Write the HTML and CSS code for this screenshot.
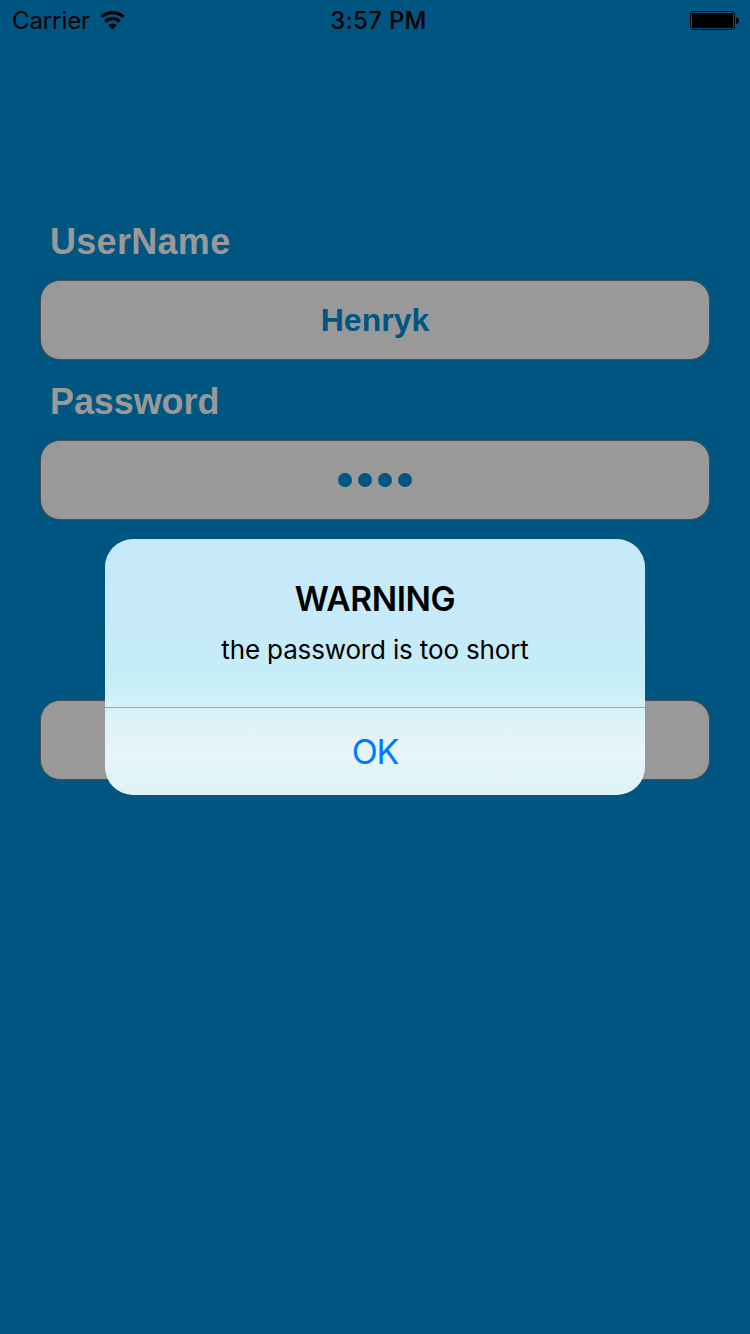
FILE: index.html
```html
<!DOCTYPE html>
<html lang="en">
<head>
<meta charset="utf-8">
<title>Login</title>
<link rel="stylesheet" href="styles.css">
</head>
<body>
<div class="screen">
  <header class="status">
    <div class="status-left">
      <span class="carrier">Carrier</span>
      <svg class="wifi" width="26" height="20" viewBox="0 0 26 20">
        <path d="M1.4 5.9A16.6 16.6 0 0 1 23.6 5.9" fill="none" stroke="#000" stroke-width="3.2"/>
        <path d="M5.4 10.5A10.2 10.2 0 0 1 19.6 10.5" fill="none" stroke="#000" stroke-width="3.2"/>
        <path d="M8.2 14.2A6 6 0 0 1 16.8 14.2L12.5 18.8Z"/>
      </svg>
    </div>
    <span class="time">3:57 PM</span>
    <svg class="battery" width="50" height="20" viewBox="0 0 50 20">
      <rect x=".5" y=".5" width="44" height="18" rx="3" fill="none" stroke="#000"/>
      <rect x="2" y="2" width="41" height="15" rx="1.6"/>
      <path d="M46 6.5Q49 7 49 9.7T46 13Z"/>
    </svg>
  </header>
  <main class="form">
    <label class="label username">UserName</label>
    <div class="field"><span class="value">Henryk</span></div>
    <label class="label password">Password</label>
    <div class="field dots"><i class="dot"></i><i class="dot"></i><i class="dot"></i><i class="dot"></i></div>
    <div class="field submit"></div>
  </main>
  <div class="overlay">
    <section class="alert" role="alertdialog">
      <div class="alert-body">
        <h1 class="title"><span>WARNING</span></h1>
        <p class="message"><span>the password is too short</span></p>
      </div>
      <div class="action"><span class="ok">OK</span></div>
    </section>
  </div>
</div>
</body>
</html>
```
FILE: styles.css
```css
body { margin: 0; }
.screen {
  position: relative;
  width: 750px;
  height: 1334px;
  overflow: hidden;
  background: #005581;
  font-family: Inter, "Liberation Sans", sans-serif;
}
.status {
  display: grid;
  grid-template-columns: 1fr auto 1fr;
  align-items: center;
  height: 42px;
  padding: 0 10px 0 12px;
  color: #000;
  font-size: 24px;
  line-height: 42px;
}
.status-left { display: flex; align-items: center; gap: 10px; }
.carrier { letter-spacing: -0.1px; }
.time { padding-left: 5px; font-weight: 550; letter-spacing: 0.3px; }
.battery { justify-self: end; }
.form {
  display: flex;
  flex-direction: column;
  padding: 161px 40px 0;
  font-family: "Liberation Sans", sans-serif;
  font-weight: 700;
}
.label {
  height: 77px;
  padding-left: 10px;
  color: #999;
  font-size: 36px;
  line-height: 77px;
}
.username { letter-spacing: 0.3px; }
.password { letter-spacing: -0.1px; }
.field {
  box-sizing: border-box;
  display: flex;
  align-items: center;
  justify-content: center;
  height: 80px;
  margin-bottom: 3px;
  border: 1px solid #4d4d4d;
  border-radius: 20px;
  background: #999;
  color: #005581;
  font-size: 32px;
}
.dots { gap: 6px; }
.dot { width: 14px; height: 14px; border-radius: 50%; background: #005581; }
.submit { margin-top: 177px; }
.overlay {
  position: absolute;
  inset: 0;
  display: flex;
  align-items: center;
  justify-content: center;
}
.alert {
  width: 540px;
  height: 256px;
  border-radius: 28px;
  overflow: hidden;
  background: linear-gradient(#c6e9fa 0, #c7ebfa 90px, #c6ecf7 120px, #c7eff7 145px, #d6f1f7 168px, #e0f3f8 190px, #e6f5fa 215px, #e2f4f8 235px, #dff3f7 256px);
}
.alert-body {
  box-sizing: border-box;
  height: 169px;
  padding-top: 40px;
  border-bottom: 1px solid #55bfdd;
  text-align: center;
  color: #000;
}
.title { margin: 0; font-size: 33.5px; font-weight: 600; line-height: 40px; letter-spacing: -0.4px; }
.message { margin: 0; padding-top: 13px; font-size: 26px; line-height: 36px; letter-spacing: -0.15px; }
.action {
  height: 87px;
  color: #007aff;
  font-size: 34px;
  line-height: 88px;
  letter-spacing: -1.2px;
  text-align: center;
}
```
